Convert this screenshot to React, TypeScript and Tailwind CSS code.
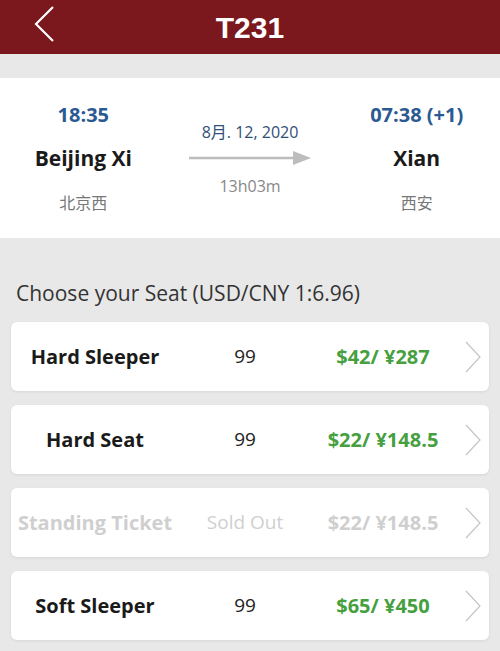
const seats = [
  { name: "Hard Sleeper", count: "99", price: "$42/ ¥287", soldOut: false },
  { name: "Hard Seat", count: "99", price: "$22/ ¥148.5", soldOut: false },
  { name: "Standing Ticket", count: "Sold Out", price: "$22/ ¥148.5", soldOut: true },
  { name: "Soft Sleeper", count: "99", price: "$65/ ¥450", soldOut: false },
]

function Station({ time, name, cn }: { time: string; name: string; cn: string }) {
  return (
    <div className="flex flex-col items-center pt-[25px]">
      <div className="text-[20px] leading-[24px] font-bold text-[#2b5a93]">{time}</div>
      <div className="mt-[17px] text-[21px] leading-[28px] font-bold text-[#1a1a1a]">{name}</div>
      <div className="mt-[20px] text-[16px] leading-[22px] text-[#777]">{cn}</div>
    </div>
  )
}

function SeatRow({ seat }: { seat: (typeof seats)[number] }) {
  const dim = seat.soldOut
  return (
    <div className="grid h-[69px] grid-cols-[168px_132px_144px_1fr] items-center rounded-md bg-white shadow-[0_1px_3px_rgba(0,0,0,0.08)]">
      <div className={`text-center text-[20px] font-bold ${dim ? "text-[#cfcfcf]" : "text-[#1a1a1a]"}`}>
        {seat.name}
      </div>
      <div className={`text-center text-[19px] ${dim ? "text-[#cfcfcf]" : "text-[#222]"}`}>{seat.count}</div>
      <div className={`text-center text-[20px] font-bold ${dim ? "text-[#cfcfcf]" : "text-[#46a040]"}`}>
        {seat.price}
      </div>
      <div className="pl-[10px]">
        <svg width="16" height="32" viewBox="0 0 16 32" fill="none">
          <path d="M1 1 L15 16 L1 31" stroke="#c4c4c4" strokeWidth="1.2" />
        </svg>
      </div>
    </div>
  )
}

export default function App() {
  return (
    <div className="min-h-[651px] w-[500px] bg-[#e8e8e8] font-['Open_Sans','Noto_Sans_CJK_SC',sans-serif]">
      <div className="relative flex h-[54px] items-center justify-center bg-[#7a181d]">
        <svg className="absolute left-[34px] top-[6px]" width="22" height="36" viewBox="0 0 22 36" fill="none">
          <path d="M19 1 L2 18 L19 35" stroke="white" strokeWidth="2.2" />
        </svg>
        <span className="font-['Liberation_Sans',sans-serif] text-[30px] font-semibold text-white">T231</span>
      </div>

      <div className="mt-[24px] grid h-[160px] grid-cols-3 bg-white">
        <Station time="18:35" name="Beijing Xi" cn="北京西" />
        <div className="flex flex-col items-center pt-[43px]">
          <div className="text-[16px] leading-[22px] text-[#2f4f77]">8月. 12, 2020</div>
          <svg className="mt-[8px]" width="122" height="14" viewBox="0 0 122 14">
            <line x1="0" y1="7" x2="106" y2="7" stroke="#bdbdbd" strokeWidth="2.5" />
            <polygon points="104,0 122,7 104,14" fill="#bdbdbd" />
          </svg>
          <div className="mt-[10px] text-[16px] leading-[22px] text-[#888]">13h03m</div>
        </div>
        <Station time="07:38 (+1)" name="Xian" cn="西安" />
      </div>

      <div className="px-[16px] pt-[41px] text-[21px] leading-[28px] text-[#333]">Choose your Seat (USD/CNY 1:6.96)</div>

      <div className="mt-[15px] flex flex-col gap-[14px] px-[11px] pb-[12px]">
        {seats.map((s) => (
          <SeatRow key={s.name} seat={s} />
        ))}
      </div>
    </div>
  )
}
